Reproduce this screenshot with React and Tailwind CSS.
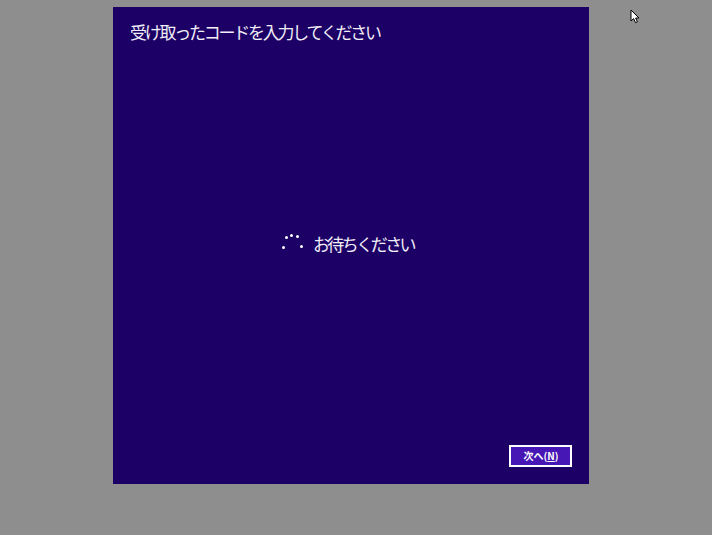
const Dot = ({ className }) => <span className={`absolute w-[3px] h-[3px] rounded-full bg-white ${className}`} />;

const Spinner = () => (
  <div className="relative w-[21px] h-[20px]">
    <Dot className="left-0 top-[12px]" />
    <Dot className="left-[3px] top-[2px]" />
    <Dot className="left-[8px] top-0" />
    <Dot className="left-[14px] top-[1px]" />
    <Dot className="left-[18px] top-[11px]" />
  </div>
);

export default function App() {
  return (
    <div className="relative w-[712px] h-[535px] overflow-hidden bg-[#8e8e8e] pt-[7px] pl-[113px] font-['Noto_Sans_CJK_JP',sans-serif]">
      <div className="w-[476px] h-[477px] bg-[#1d0066] flex flex-col pl-[17px] pr-[17px] pt-[13px] pb-[17px] text-[#f0eef6]">
        <h1 className="text-[17px] leading-[24px] font-normal [letter-spacing:-2.25px] whitespace-nowrap">受け取ったコードを入力してください</h1>
        <div className="flex-1 flex items-center justify-center gap-[10px] pr-[6px] pb-[2px]">
          <Spinner />
          <span className="text-[17px] leading-[24px] font-normal [letter-spacing:-2.55px] whitespace-nowrap">お待ちください</span>
        </div>
        <div className="flex justify-end">
          <button className="w-[63px] h-[22px] bg-[#4617b4] border-2 border-white pl-px text-white text-[10px] font-bold leading-none flex items-center justify-center">
            次へ(<span className="underline">N</span>)
          </button>
        </div>
      </div>
      <svg className="absolute left-[630px] top-[9px]" width="11" height="15" viewBox="0 0 11 15">
        <path d="M1 1 L1 12 L3.6 9.6 L5.5 13.6 L7.4 12.8 L5.6 9 L9 9 Z" fill="#fff" stroke="#000" strokeWidth="1" />
      </svg>
    </div>
  );
}
